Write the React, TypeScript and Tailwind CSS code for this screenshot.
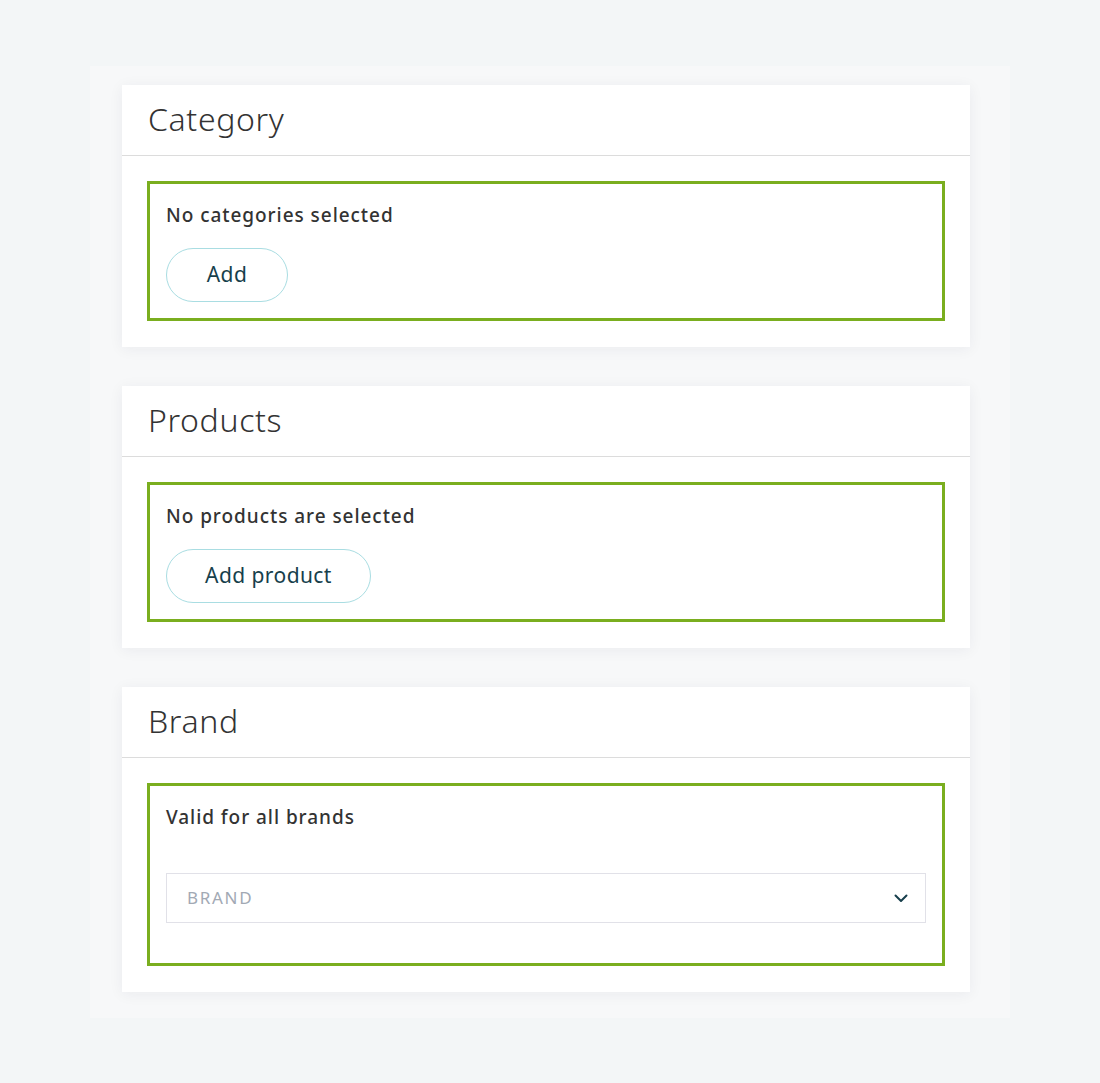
import React from "react";

function Card({ title, children }: { title: string; children: React.ReactNode }) {
  return (
    <div className="bg-white shadow-[0_2px_14px_rgba(30,40,60,0.06)]">
      <div className="h-[71px] flex items-center pl-[26px] pb-[3px] border-b border-[#dcdcdc]">
        <h2 className="text-[32px] tracking-[0.02em] font-light text-[#333] leading-none">{title}</h2>
      </div>
      <div className="px-[25px] pt-[25px] pb-[26px]">
        <div className="border-[3px] border-[#7aae1f] px-[16px]">{children}</div>
      </div>
    </div>
  );
}

function PillButton({ label, w }: { label: string; w: string }) {
  return (
    <button
      className={`h-[54px] ${w} rounded-full border border-[#a9dde2] bg-white text-[21px] tracking-[0.02em] text-[#173f4c] flex items-center justify-center`}
    >
      {label}
    </button>
  );
}

export default function App() {
  return (
    <div
      className="min-h-[1083px] bg-[#f3f6f7] pt-[66px]"
      style={{ fontFamily: '"Noto Sans", "Open Sans", sans-serif' }}
    >
      <div className="mx-[90px] bg-[#f7f8f9] pl-[32px] pr-[40px] pt-[19px] pb-[26px] flex flex-col gap-[39px]">
        <Card title="Category">
          <div className="pt-[18px] pb-[16px]">
            <p className="text-[19px] tracking-[0.05em] font-medium text-[#333] leading-[27px]">No categories selected</p>
            <div className="mt-[19px]">
              <PillButton label="Add" w="w-[122px]" />
            </div>
          </div>
        </Card>
        <Card title="Products">
          <div className="pt-[18px] pb-[16px]">
            <p className="text-[19px] tracking-[0.05em] font-medium text-[#333] leading-[27px]">No products are selected</p>
            <div className="mt-[19px]">
              <PillButton label="Add product" w="w-[205px]" />
            </div>
          </div>
        </Card>
        <Card title="Brand">
          <div className="pt-[18px] pb-[40px]">
            <p className="text-[19px] tracking-[0.05em] font-medium text-[#333] leading-[27px]">Valid for all brands</p>
            <div className="mt-[42px] h-[50px] border border-[#e1e1e8] flex items-center justify-between pl-[20px] pr-[17px]">
              <span className="text-[17px] tracking-[0.1em] text-[#a2a9b4] uppercase">Brand</span>
              <svg width="14" height="14" viewBox="0 0 14 14" fill="none">
                <path d="M1.5 4.5 L7 10 L12.5 4.5" stroke="#173f4c" strokeWidth="2" strokeLinecap="round" strokeLinejoin="round" />
              </svg>
            </div>
          </div>
        </Card>
      </div>
    </div>
  );
}
